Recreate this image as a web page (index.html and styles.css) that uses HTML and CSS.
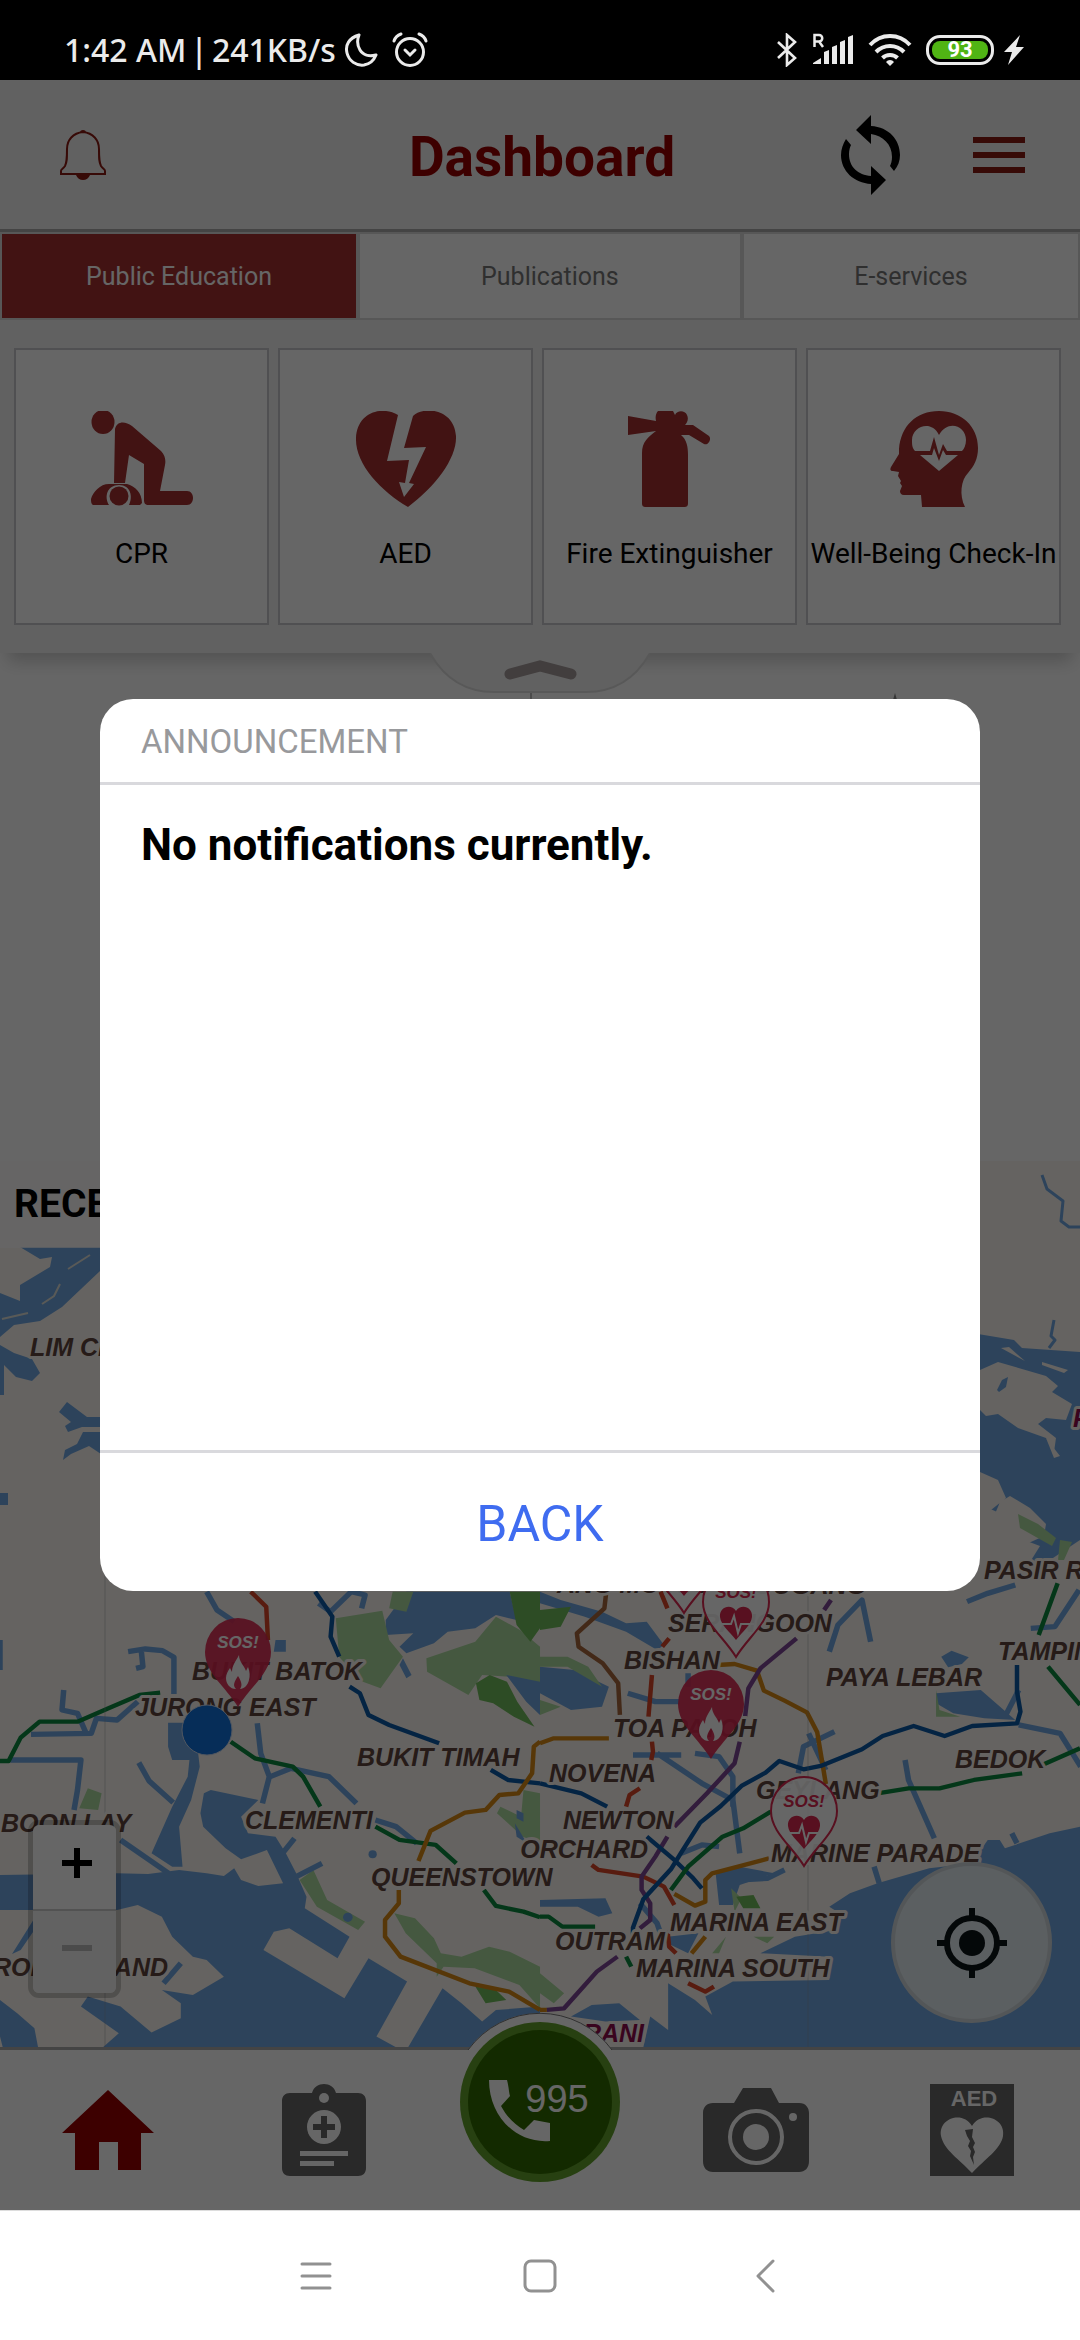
FILE: index.html
```html
<!DOCTYPE html>
<html lang="en">
<head>
<meta charset="utf-8">
<meta name="viewport" content="width=device-width, initial-scale=1">
<title>Dashboard</title>
<link rel="stylesheet" href="styles.css">
</head>
<body class="phone">

<div class="status">
  <div class="status__group">
    <span class="status__text"><span>1:42 AM</span><span>|</span><span>241KB/s</span></span>
    <svg class="status__moon" width="34" height="36" viewBox="0 0 34 36" fill="none" stroke="currentColor" stroke-width="3" stroke-linejoin="round"><path d="M15 3C5 6 1 13 3 21c2 8 9 13 17 12 6-1 10-5 12-10-7 2-13 0-16-5-3-5-3-10-1-15z"/></svg>
    <svg width="36" height="36" viewBox="0 0 36 36" fill="none" stroke="currentColor" stroke-width="3" stroke-linecap="round"><circle cx="18" cy="20" r="13.500"/><path d="M2 9c1-3 4-6 7-7M34 9c-1-3-4-6-7-7M13 18l5 5 5-5"/></svg>
  </div>
  <div class="status__group">
    <svg width="22" height="34" viewBox="0 0 22 34" fill="none" stroke="currentColor" stroke-width="2.600"><path d="M2 9l17 16-8 7V2l8 7L2 25"/></svg>
    <svg width="42" height="34" viewBox="0 0 42 34" fill="currentColor"><path d="M1 31v-1l8-5v6zM12 19l5-2v14h-5zM20 14l5-2v19h-5zM28 9l5-2v24h-5zM36 4l5-2v29h-5z"/><path d="M2.500 14V2H7a3 3 0 0 1 0 6.500H3M7 8.500l4 5.500" fill="none" stroke="currentColor" stroke-width="2.500"/></svg>
    <svg width="44" height="32" viewBox="0 0 44 32" fill="none" stroke="currentColor" stroke-width="4"><path d="M2 11C13-1 31-1 42 11M8 18c8-8 20-8 28 0M14.500 24c4-4 11-4 15 0"/><path d="M18 28l4 4 4-4a5 5 0 0 0-8 0z" fill="currentColor" stroke="none"/></svg>
    <span class="battery"><span class="battery__level">93</span></span>
    <svg class="status__bolt" width="20" height="32" viewBox="0 0 20 32" fill="currentColor"><path d="M16 1L0 18h8L4 31l16-18h-8z"/></svg>
  </div>
</div>

<div class="app">
  <header class="header">
    <button class="icon-btn header__bell" aria-label="Notifications">
      <svg width="48" height="52" viewBox="0 0 48 52" fill="none" stroke="currentColor" stroke-width="2"><path d="M24 3C14 4 8 11 8 20c0 10 0 13-2 17-2 3-4 3-4 5v3h44v-3c0-2-2-2-4-5-2-4-2-7-2-17 0-9-6-16-16-17z"/><path d="M21 4a3 3 0 0 1 6 0zM17 46h14c-1 3-4 5-7 5s-6-2-7-5z" fill="currentColor" stroke="none"/></svg>
    </button>
    <h1 class="header__title">Dashboard</h1>
    <div class="header__actions">
      <button class="icon-btn header__sync" aria-label="Refresh">
        <svg width="60" height="80" viewBox="0 0 60 80"><path d="M30 0L15 15l15 14V19c12 2 21 10 21 23 0 4-1 7-2 9l4 5c4-5 6-10 6-16 0-15-11-28-29-29zM30 80l15-15-15-14v10C17 60 8 52 8 39c0-4 1-7 2-9l-5-6C2 29 0 34 0 40c0 16 13 28 30 29z" fill="currentColor"/></svg>
      </button>
      <button class="icon-btn header__menu" aria-label="Menu">
        <svg width="52" height="36" viewBox="0 0 52 36" fill="currentColor"><path d="M0 0h52v6H0zM0 15h52v6H0zM0 30h52v6H0z"/></svg>
      </button>
    </div>
  </header>

  <section class="panel">
    <div class="tabs">
      <button class="tab tab--public tab--active">Public Education</button>
      <button class="tab tab--publications">Publications</button>
      <button class="tab tab--services">E-services</button>
    </div>
    <div class="cards">
      <a class="card" href="#cpr">
        <svg class="card__icon" width="102" height="96" viewBox="0 0 102 96" fill="currentColor"><ellipse cx="12" cy="11" rx="11.500" ry="12"/><path d="M24 18c2-8 10-8 17-3l29 25c4 4 5 9 4 14l-5 26h27c8 0 8 14 0 14H58c-4 0-5-2-5-5V53L38 44l-4 28H23z"/><path d="M0 88c2-7 9-15 18-15h18c8 2 15 9 15 19l-2 2H38c4-8 2-20-10-20S13 86 18 94H2c-2-1-2-4-2-6z"/><circle cx="28" cy="85" r="9.500"/></svg>
        <span class="card__label">CPR</span>
      </a>
      <a class="card" href="#aed">
        <svg class="card__icon" width="102" height="96" viewBox="0 0 102 96" fill="currentColor"><path d="M43 4l-11 46 22-1-4 23-6-1 5 15 10-13-5-1 17-36-22 1 9-32C68-5 99-3 101 25c1 22-20 50-48 71C26 80 0 53 1 27 2 2 26-6 43 4z"/></svg>
        <span class="card__label">AED</span>
      </a>
      <a class="card" href="#fire-extinguisher">
        <svg class="card__icon" width="102" height="96" viewBox="0 0 102 96" fill="currentColor"><path d="M9 5l28 5c-1-4 0-8 2-10h15l2 4c2-5 10-5 12 0 2 4 0 8-2 10h8l16 11c3 3-1 10-5 8L70 24h-8c6 5 7 12 7 20v48c0 3-1 4-4 4H27c-3 0-4-1-4-4V42c0-11 6-16 14-22L9 24z"/></svg>
        <span class="card__label">Fire Extinguisher</span>
      </a>
      <a class="card" href="#well-being">
        <svg class="card__icon" width="102" height="96" viewBox="-7 0 102 96"><path d="M32 96L31 84H14c-3 0-4-2-4-4l2-5-2-3 1-2-3-5 1-4-6-1c-3 0-3-2-2-4l8-13v-5C11 15 26 0 49 0c22 0 39 15 39 37 0 11-4 18-10 25-7 7-9 22-3 34z" fill="currentColor"/><path d="M49 24C58 8 76 15 76 29c0 5-2 9-4 11H57l-4-7-4 11-5-18-4 14H25c-3-3-3-7-3-11 0-13 19-21 27-5zM30 44h12l2-7 5 13 4-11 3 5h12L49 60z" class="card__cut"/></svg>
        <span class="card__label">Well-Being Check-In</span>
      </a>
    </div>
    <button class="icon-btn panel__handle" aria-label="Collapse panel">
      <svg width="220" height="40" viewBox="0 0 220 40"><path class="panel__handle-shape" d="M0 0C14 25 36 39 64 39h92c28 0 50-14 64-39"/><path class="panel__handle-mark" d="M80 21l30-8 31 8"/></svg>
    </button>
  </section>

  <section class="feed">
    <div class="feed__column feed__column--split"></div>
    <div class="feed__column"><svg width="14" height="40" viewBox="0 0 14 40" class="feed__tip"><path d="M7 0l7 24H0z"/></svg></div>
  </section>

  <section class="map">
    <svg class="map__canvas" viewBox="0 1161 1080 886" preserveAspectRatio="xMidYMid slice">
      <!-- north coast and strait -->
      <g class="water">
        <path d="M20 1247l20 12 12-2-2 10-30 18v16l-20-8v44l14-12 26-4 22-14 38-36v-24z"/>
        <path d="M0 1345l14 8 18 6 8 14-8 8-16-4-12-12v30H0zM0 1493h8v12H0z"/>
        <path d="M59 1412l8-10 20 15h14v10H82l-14 5-3-6 6-4zM101 1432v22l-12-8-18 8-8 6 2-10 12-6 6-12z"/>
        <path d="M978 1334l36 6 8 8 58 4v188l-30 20-20 2 10-16-16-6-18-24-40-18z"/>
      </g>
      <g class="land">
        <path d="M980 1370l18-8 48 14 12 10-6 6 20 12-6 16-20-2-8 6 18 14-2 14-8-14-28-10-20-14-12 2-6-6-12 2z"/>
        <path d="M980 1472l18 8 8 18-25 20 28 22-4 4-25-15zM1000 1502l10-6 20 12 16 16-2 12-22 10-30-25z"/>
        <path d="M1001 1348l8-1 16 14zM1042 1362l26 8-4 3-22-8zM1046 1438l14 18-6 2z"/>
      </g>
      <path class="water" d="M997 1390l5-10 6-3-2 10-7 5z"/>
      <g class="river river--thin">
        <path d="M1042 1175l5 14 16 12-2 20 8 6h11M1054 1320l-3 16 4 4-6 8"/>
      </g>
      <path class="park" d="M1018 1514l20 10 18 14-4 8-32-18zM1060 1540l12 2-8 18h-6z"/>
      <g class="land-line"><path d="M2 1319l26-6M42 1304l12-8 6-12M68 1269l22-14"/></g>

      <!-- western half -->
      <g transform="translate(0 1560) scale(.3444 .3333)">
        <path class="water" d="M0 945L340 940 430 942 520 930 600 940 650 948 680 925 700 960 750 978 822 970 775 870 700 898 655 865 590 800 582 760 592 700 612 690 750 720 700 770 720 820 800 830 830 880 860 940 890 1010 885 1045 1015 1130 980 1195 840 1105 795 1115 765 1170 1000 1315 1070 1195 1182 1265 1093 1430 1150 1462H1185L1285 1285 1340 1330 1400 1385 1440 1350 1568 1340V1470H290L345 1420 235 1340 255 1310 350 1340 440 1418 525 1375V1330L470 1290 560 1305 650 1250 600 1200 560 1190 500 1130 470 1070 400 1035 340 1050 100 1050H0zM100 1075V1110L60 1170 35 1182zM0 1320L50 1360 100 1405 112 1470H10L0 1430z"/>
        <path class="water" d="M488 488H565L580 620 555 720 520 800 530 920H500L440 880 500 740 545 650 550 600 500 600 488 560z"/>
        <path class="water" d="M1120 180L1180 95H1480L1500 180 1440 165 1380 205 1300 215 1260 250 1180 280 1160 260 1200 220 1120 225zM800 240h30v35h-35zM1005 240h25v40h-25zM1170 295l25 50-15 10-20-40zM1050 315l35 10-15 25-30-10z"/>
        <path class="park" d="M975 175L1110 152 1130 240 1170 290 1105 385 1040 360 985 290zM1238 295L1380 245 1440 170 1510 210 1568 260V420L1480 350 1400 345 1360 405 1240 335zM1140 95h60l-20 60-50-10zM255 685l40 15-10 50-55-5zM870 960l40-30 40 90 110 65-20 25-120-70zM1145 1060l60 15 55 60 20 45 60 10 80-30 60 15 88 45v125l-60-70-130-50-90-5-20 30 0-40-90-90zM1520 690l48 10v150l-50-20-75-70 10-20 60 30z"/>
        <path class="forest" d="M1480 95h88v110l-28 40-40-50zM1382 370l40-25 50 20 30 60 50 75-60-30-60-40-40-10zM1380 1280l60 10 30 30-60 10z"/>
        <path class="water" d="M1470 345l98 20v100l-40-40zM1495 790l35 60-30-20zM1500 750l20 10v25l-20-10z"/>
        <g class="river">
          <path d="M600 95l30 55 50 35M372 275l50-8 50 5 33 20v110M410 270l5 50-20 5M185 390l-5 60 45 10 25 60M90 523l175-3 15-45 60 5 60-55M30 600h205l-10 90-10 60M403 608l30 55 70 65M747 490l10 90 25 70-20 80M785 650l60-25 110 25 80 80M1090 780l60 20 60 50M350 840l140 100M820 880l35-45M860 950l75-40M475 1270l50-60M925 130l35 25 60-60 40 10-10 40M0 240v90"/>
        </g>
        <circle class="water" cx="1010" cy="1072" r="14"/><circle class="water" cx="1082" cy="883" r="12"/>
        <g class="rail">
          <path class="rail--green" d="M0 603h25l35-70 55-48h110l90-40 90-40 60-7M670 545l70 50 110 25 30 30 50 90M1090 800l70 40 105 15 60 55M1405 990l35 48 80 17 48 17"/>
          <path class="rail--red" d="M728 95l45 45 5 100"/>
          <path class="rail--blue" d="M915 95l50 75-5 60 25 60M1015 380l30 20 25 65 60 30 145 55M1425 630l50 30 93 10"/>
          <path class="rail--orange" d="M1568 545l-18 15-5 80-40 60-55 5-40 45-60 8-100 55-35 90M1158 990v40l-40 50v50l45 60 200 80 115 25 90 55"/>
        </g>
      </g>

      <!-- eastern half -->
      <g transform="translate(540 1560) scale(.3444 .3333)">
        <path class="water" d="M1568 800L1480 820 1350 865 1335 840 1300 840 1270 885 1260 910 1130 925 980 970 900 1000 840 1040 870 1060 860 1110 740 1130 640 1180 840 1190 840 1260 560 1265 480 1310 500 1365 450 1320 372 1270V1410L320 1370 300 1462H1568z"/>
        <path class="water" d="M0 95l60 25 120 35 70 35 60-5 50 70-20 15-90-55-120-45-130-40zM0 320l100 10 100 50-20 60-90 10-90-50zM1150 400l130-10 100 90-90-5-90-15-50-30zM1165 290l30-18 50 20-20 20-40 10zM510 940l70-20 100 20-100 35-20 60h-40zM370 1130l90-10-30 60-60-30zM90 1370l60-35 80-5 60 50-100 5zM0 1020l190-5 20 45-40 10-60-30H0z"/>
        <path class="park" d="M0 290l80 0 60 30 40 60-100-60-80 0zM0 420l60 20-60 25zM1150 390l10 60 60 20-70 0zM555 985l30 30-20 40zM500 1180l40-50-20 50zM620 1130l60 0-20 20zM0 1240l70 60-30 30-40-30z"/>
        <path class="forest" d="M0 150l90-10-30 60-60 10zM570 1010l50-5 20 40-50 0z"/>
        <g class="river">
          <path d="M255 400l80 25h70M430 340v40M270 585h140M340 580l130 90 90 50 20 160M450 580l70 10 40 60v90M750 640l15-80 90-45M840 275l25-80 70-75 25 125M1060 600l10 60 75 175M1390 495l120 25 60 100M1240 125l60-25 80-25M1425 205l70-5 70-110M1350 470l40-80M410 880l60-25 50 5M570 960l90-5 50-25M970 920l15 50M1370 820l15 30M290 1030l50 60 20 60M780 520l50 110"/>
        </g>
        <g class="rail">
          <path class="rail--brown" d="M192 100l-5 45-80 75 5 40 70 50 45 60 5 95"/>
          <path class="rail--red" d="M350 95l20 50M375 235l-20 25M325 345l-10 125M325 545l3 30-5 25M290 685l-30 20-10 35M150 915l20 15 130 20 60 30 30 55M370 1110l5 50 20 20M430 1270l50 25 25-15"/>
          <path class="rail--orange" d="M0 550l40-15 160 0M515 315l50-3 65 20 20 60 60 30 65 35 30 60 25 155M665 895l-90 25-75 20-20 20v65l-30 12-60-35M480 1130l-40 50M0 1350h20"/>
          <path class="rail--purple" d="M845 120l-20 30M745 235l-105 90-35 60-10 90M580 545l-15 65-80 90-95 100M370 830l-35 60-40 60v40l25 40v50l-30 25M225 1190l-60 45-95 110-50 5"/>
          <path class="rail--blue" d="M1385 315v80l10 60-10 35-130 8-80 30-90-30-90 30-60 40-120 50-50 10-70-25-40 35-70 40-60 60-60 50-55 90-30 50-80 90-30 85v40M0 670l120 30 75 40M310 830l80 70 55 55 25 30"/>
          <path class="rail--green" d="M1503 70l-55 155M1475 320l93 115M1568 565l-110 50M1400 640l-140 20-100 25-90 0-90 15M670 755l-80 50-60 25-100 90-50 70M0 1070h25l40 30h95M250 1190l15 30"/>
        </g>
      </g>
      <path class="tile-edge" d="M105 1560v487M808 1560v487"/>

      <g class="place">
        <text x="30" y="1356">LIM CHU KANG</text>
        <text x="984" y="1579">PASIR RIS</text>
        <text x="557" y="1593">ANG MO KIO</text>
        <text x="866" y="1594" text-anchor="end">HOUGANG</text>
        <text x="668" y="1632">SERANGOON</text>
        <text x="998" y="1660">TAMPINES</text>
        <text x="624" y="1669">BISHAN</text>
        <text x="192" y="1680">BUKIT BATOK</text>
        <text x="826" y="1686">PAYA LEBAR</text>
        <text x="135" y="1716">JURONG EAST</text>
        <text x="613" y="1737">TOA PAYOH</text>
        <text x="357" y="1766">BUKIT TIMAH</text>
        <text x="955" y="1768">BEDOK</text>
        <text x="549" y="1782">NOVENA</text>
        <text x="756" y="1799">GEYLANG</text>
        <text x="245" y="1829">CLEMENTI</text>
        <text x="563" y="1829">NEWTON</text>
        <text x="1" y="1832">BOON LAY</text>
        <text x="648" y="1858" text-anchor="end">ORCHARD</text>
        <text x="771" y="1862">MARINE PARADE</text>
        <text x="371" y="1886">QUEENSTOWN</text>
        <text x="670" y="1931">MARINA EAST</text>
        <text x="555" y="1950">OUTRAM</text>
        <text x="168" y="1976" text-anchor="end">JURONG ISLAND</text>
        <text x="636" y="1977">MARINA SOUTH</text>
        <text class="place--red" x="644" y="2042" text-anchor="end">BRANI</text>
        <text class="place--red" x="1073" y="1427">PULAU</text>
      </g>

      <defs>
        <path id="drop" d="M34 90C22 70 1 56 1 35a33 34 0 0 1 66 0C67 56 46 70 34 90z"/>
        <path id="flame" d="M35 38c0 7 5 10 7 16l2-4c2 5 2 9 1 13-1 5-5 9-9 9 3-4 1-8-2-13-3 5-6 9-2 13-6 0-10-5-10-11 0-4 2-7 4-10l2 4c0-7 4-11 7-17z"/>
        <path id="heart" d="M34 51c5-8 17-4 16 6-1 8-9 14-16 23-7-9-15-15-16-23-1-10 11-14 16-6z"/>
      </defs>
      <g class="pin pin--heart" transform="translate(650 1523)"><use href="#drop"/><use class="pin__mark" href="#heart" y="-7"/></g>
      <g class="pin pin--heart" transform="translate(702 1567)"><use href="#drop"/><use class="pin__mark" href="#heart" y="-7"/><path class="pin__beat" d="M16 57h13l3-8 4 17 3-9h13"/><text x="34" y="31">SOS!</text></g>
      <g class="pin pin--fire" transform="translate(204 1617)"><use href="#drop"/><use class="pin__mark" href="#flame"/><text x="34" y="31">SOS!</text></g>
      <g class="pin pin--fire" transform="translate(677 1669)"><use href="#drop"/><use class="pin__mark" href="#flame"/><text x="34" y="31">SOS!</text></g>
      <g class="pin pin--heart" transform="translate(770 1776)"><use href="#drop"/><use class="pin__mark" href="#heart" y="-7"/><path class="pin__beat" d="M16 57h13l3-8 4 17 3-9h13"/><text x="34" y="31">SOS!</text></g>
      <circle class="here" cx="207" cy="1730" r="25"/>
    </svg>
    <h2 class="map__heading">RECENT</h2>
    <div class="zoom">
      <button class="zoom__btn" aria-label="Zoom in"><svg width="30" height="30" viewBox="0 0 30 30"><path d="M0 12h12V0h6v12h12v6H18v12h-6V18H0z" fill="currentColor"/></svg></button>
      <button class="zoom__btn zoom__btn--off" aria-label="Zoom out" disabled><svg width="30" height="30" viewBox="0 0 30 30"><path d="M0 12h30v6H0z" fill="currentColor"/></svg></button>
    </div>
    <button class="locate" aria-label="My location">
      <svg width="70" height="70" viewBox="0 0 70 70"><circle cx="35" cy="35" r="13" fill="currentColor"/><path d="M35 0v10M35 60v10M0 35h10M60 35h10" stroke="currentColor" stroke-width="6"/><circle cx="35" cy="35" r="25" fill="none" stroke="currentColor" stroke-width="6"/></svg>
    </button>
  </section>

  <nav class="dock">
    <a class="dock__item dock__item--home" href="#home" aria-label="Home"><svg width="92" height="80" viewBox="0 0 92 80" fill="currentColor"><path d="M46 0l46 43H79v37H56V52H37v28H13V43H0z"/></svg></a>
    <a class="dock__item" href="#report" aria-label="Report"><svg width="84" height="92" viewBox="0 0 84 92"><path d="M8 9h22c3-12 21-12 24 0h22c5 0 8 3 8 8v67c0 5-3 8-8 8H8c-5 0-8-3-8-8V17c0-5 3-8 8-8z" fill="currentColor"/><g fill="#fff"><circle cx="42" cy="14" r="5"/><circle cx="42" cy="43" r="17"/><path d="M18 67h48v5H18zM18 77h34v5H18z"/></g><path d="M39 32h6v8h8v6h-8v8h-6v-8h-8v-6h8z" fill="currentColor"/></svg></a>
    <span class="dock__item"></span>
    <a class="dock__item" href="#camera" aria-label="Camera"><svg width="106" height="84" viewBox="0 0 106 84"><path d="M10 15h21l9-15h28l8 15h20c7 0 10 5 10 10v48c0 7-4 11-10 11H10C4 84 0 80 0 73V25c0-6 4-10 10-10z" fill="currentColor"/><g fill="#fff"><circle cx="90" cy="29" r="4"/><circle cx="53" cy="49" r="13"/></g><circle cx="53" cy="49" r="26" fill="none" stroke="#fff" stroke-width="4"/></svg></a>
    <a class="dock__item" href="#aed-map" aria-label="AED locations"><svg width="84" height="92" viewBox="0 0 84 92"><path d="M0 0h84v92H0z" fill="currentColor"/><text class="dock__aed" x="44" y="22">AED</text><path d="M42 42c9-16 34-8 31 10-2 13-18 23-31 37-13-14-28-23-31-37-3-18 22-26 31-10z" fill="#fff"/><path d="M35 46l8-1-1 8 3 6-2 4 2 5-2 5 1 8-4-9 1-5-3-5 2-5-3-5z" fill="currentColor"/></svg></a>
    <button class="call" aria-label="Call 995">
      <svg width="180" height="180" viewBox="0 0 180 180"><circle cx="90" cy="90" r="89" fill="#fff" stroke="none"/><path d="M18 38a89 89 0 0 1 144 0" fill="none" stroke="#777" stroke-width="1"/><circle cx="90" cy="90" r="80" fill="#62a02c"/><circle cx="90" cy="90" r="72" fill="#316a00"/><path d="M39 68h18c2 8 2 13 3 16l-9 10c6 11 13 18 23 24l10-10 16 3v18c-34 3-61-25-61-61z" fill="#fff"/><text class="call__number" x="107" y="100">995</text></svg>
    </button>
  </nav>

  <div class="scrim">
    <div class="dialog" role="dialog" aria-modal="true" aria-labelledby="dialog-title">
      <h2 class="dialog__title" id="dialog-title">ANNOUNCEMENT</h2>
      <p class="dialog__body">No notifications currently.</p>
      <button class="dialog__back">BACK</button>
    </div>
  </div>
</div>

<nav class="sysnav">
  <button class="icon-btn" aria-label="Recent apps"><svg width="32" height="32" viewBox="0 0 32 32"><path d="M2 4h28M2 16h28M2 28h28"/></svg></button>
  <button class="icon-btn" aria-label="Home"><svg width="34" height="34" viewBox="0 0 34 34"><rect x="2" y="2" width="30" height="30" rx="6"/></svg></button>
  <button class="icon-btn" aria-label="Back"><svg width="32" height="34" viewBox="0 0 32 34"><path d="M25 2L10 17l15 15"/></svg></button>
</nav>
</body>
</html>
```
FILE: styles.css
```css
* { box-sizing: border-box; }

.phone {
  margin: 0;
  min-height: 100vh;
  display: flex;
  flex-direction: column;
  background: #fff;
  color: #000;
  font-family: Roboto, "Liberation Sans", sans-serif;
}

svg { display: block; }
button { font: inherit; color: inherit; cursor: pointer; }
a { color: inherit; text-decoration: none; }

.icon-btn {
  padding: 0;
  border: 0;
  background: none;
}

/* Status bar */
.status {
  height: 80px;
  padding: 20px 56px 0 64px;
  display: flex;
  justify-content: space-between;
  align-items: center;
  background: #000;
  color: #ebebeb;
}
.status__group { display: flex; align-items: center; gap: 14px; }
.status__text {
  display: flex;
  gap: 4px;
  font: 500 32px/40px "Noto Sans", "Open Sans", sans-serif;
  white-space: nowrap;
}
.status__moon { margin-left: -6px; }
.status__bolt { margin-left: -4px; }
.battery {
  width: 68px;
  height: 30px;
  padding: 3px;
  display: flex;
  border: 3px solid #ebebeb;
  border-radius: 14px;
}
.battery__level {
  flex: 1;
  border-radius: 8px;
  background: #50b414;
  color: #fff;
  font: 700 22px/18px Roboto, sans-serif;
  text-align: center;
}

/* App shell */
.app {
  position: relative;
  flex: 1;
  display: flex;
  flex-direction: column;
}

.header {
  height: 152px;
  padding: 0 55px 0 59px;
  display: grid;
  grid-template-columns: 1fr auto 1fr;
  align-items: center;
  background: #f2f2f2;
  border-bottom: 3px solid #aaa;
}
.header__bell { justify-self: start; color: #8b1a12; }
.header__title {
  margin: 0;
  padding-top: 4px;
  color: #990000;
  font-size: 55px;
  line-height: 64px;
  font-weight: 700;
}
.header__actions { justify-self: end; display: flex; align-items: center; gap: 72px; }
.header__menu { color: #8b1a12; }

/* Education panel */
.panel {
  position: relative;
  z-index: 1;
  background: #f2f2f2;
  box-shadow: 0 16px 16px -8px rgba(0, 0, 0, .2);
}
.tabs { display: flex; }
.tab {
  height: 88px;
  padding: 0;
  border: 2px solid #dadada;
  background: #fff;
  color: #777;
  font-size: 25px;
}
.tab--public { flex: 358 0 0; }
.tab--publications { flex: 384 0 0; }
.tab--services { flex: 338 0 0; }
.tab--active { background: #a53030; color: #fff; }

.cards {
  padding: 28px 19px 28px 14px;
  display: grid;
  grid-template-columns: repeat(4, minmax(0, 1fr));
  gap: 9px;
}
.card {
  height: 277px;
  padding-top: 61px;
  display: flex;
  flex-direction: column;
  align-items: center;
  gap: 31px;
  background: #fff;
  border: 2px solid #c8c8cc;
}
.card__icon { color: #a53030; }
.card__cut { fill: #fff; }
.card__label { font-size: 28px; line-height: 32px; white-space: nowrap; }

.panel__handle {
  position: absolute;
  top: 100%;
  left: 50%;
  margin-left: -110px;
}
.panel__handle-shape { fill: #f2f2f2; stroke: #dcdcdc; stroke-width: 2; }
.panel__handle-mark {
  fill: none;
  stroke: #a59b9b;
  stroke-width: 11;
  stroke-linecap: round;
  stroke-linejoin: miter;
}

.feed { flex: 508 0 0; display: grid; grid-template-columns: 532px 1fr; background: #fff; }
.feed__column { padding-top: 40px; }
.feed__column--split { border-right: 2px solid #bbb; }
.feed__tip { margin-left: 356px; fill: #888; }

/* Map */
.map {
  position: relative;
  flex: 886 0 0;
  overflow: hidden;
  background: #fcf8f2;
}
.map__canvas { position: absolute; inset: 0; width: 100%; height: 100%; }
.water { fill: #71a8e4; }
.land { fill: #fcf8f2; }
.park { fill: #acdca0; }
.forest { fill: #72be5c; }
.river { fill: none; stroke: #71a8e4; stroke-width: 16; stroke-linejoin: round; }
.river--thin { stroke-width: 3; }
.land-line { fill: none; stroke: #dfe0da; stroke-width: 2; }
.rail { fill: none; stroke-width: 13; stroke-linejoin: round; }
.rail--green { stroke: #0a8a40; }
.rail--red { stroke: #dc4628; }
.rail--blue { stroke: #0c5aa8; }
.rail--orange { stroke: #d98a14; }
.rail--brown { stroke: #a8683c; }
.rail--purple { stroke: #7e4696; }
.tile-edge { stroke: #8d9299; stroke-width: 1; opacity: .4; }

.place {
  font: italic 700 25px "Liberation Sans", sans-serif;
  fill: #60443c;
  stroke: #fcf8f2;
  stroke-width: 6;
  stroke-linejoin: round;
  paint-order: stroke;
}
.place--red { fill: #900c4c; }

.pin text {
  font: italic 700 17px "Liberation Sans", sans-serif;
  text-anchor: middle;
  stroke: none;
}
.pin--fire { fill: #dc2850; fill-opacity: .92; }
.pin--fire text, .pin--fire .pin__mark { fill: #fff; fill-opacity: 1; }
.pin--heart { fill: #fff; fill-opacity: .92; stroke: #dc2850; stroke-width: 2; }
.pin--heart text, .pin--heart .pin__mark { fill: #dc2850; stroke: none; fill-opacity: 1; }
.pin__beat { fill: none; stroke: #fff; stroke-width: 2; }
.here { fill: #0f70dc; stroke: #c8d8f0; stroke-width: 1; }

.map__heading {
  position: absolute;
  top: 0;
  left: 0;
  width: 60%;
  margin: 0;
  padding: 0 14px;
  background: rgba(255, 255, 255, .75);
  font-size: 39px;
  line-height: 87px;
  font-weight: 700;
}
.zoom {
  position: absolute;
  left: 28px;
  bottom: 49px;
  width: 93px;
  border: 5px solid rgba(0, 0, 0, .2);
  border-radius: 11px;
  background-clip: padding-box;
}
.zoom__btn {
  width: 100%;
  height: 84px;
  padding: 0 0 8px 4px;
  display: grid;
  place-items: center;
  border: 0;
  border-radius: 6px 6px 0 0;
  background: #fff;
}
.zoom__btn--off {
  border-top: 2px solid #ccc;
  border-radius: 0 0 6px 6px;
  background: #f4f4f4;
  color: #bbb;
}
.locate {
  position: absolute;
  right: 28px;
  bottom: 24px;
  width: 161px;
  height: 161px;
  padding: 0;
  display: grid;
  place-items: center;
  border: 4px solid #d0d8dc;
  border-radius: 50%;
  background: #e4edf2;
  color: #0c1418;
}

/* Dock */
.dock {
  position: relative;
  height: 163px;
  display: grid;
  grid-template-columns: repeat(5, 1fr);
  background: #fff;
  border-top: 3px solid #aaa;
  color: #666;
}
.dock__item { display: grid; place-items: center; }
.dock__item--home { color: #990000; }
.dock__aed { font: 700 22px "Liberation Sans", sans-serif; fill: #fff; text-anchor: middle; }
.call {
  position: absolute;
  left: 50%;
  bottom: 18px;
  margin-left: -90px;
  padding: 0;
  border: 0;
  border-radius: 50%;
  background: none;
}
.call__number { font: 38px "Liberation Sans", sans-serif; fill: #fff; text-anchor: middle; }

/* Announcement dialog */
.scrim {
  position: absolute;
  inset: 0;
  z-index: 2;
  padding: 0 100px;
  display: flex;
  align-items: center;
  background: rgba(0, 0, 0, .6);
}
.dialog {
  flex: 1;
  display: flex;
  flex-direction: column;
  border-radius: 33px;
  background: #fff;
}
.dialog__title {
  margin: 0;
  padding: 23px 41px 21px;
  border-bottom: 3px solid #d9d9dd;
  color: #98999c;
  font-size: 33px;
  line-height: 39px;
  font-weight: 400;
}
.dialog__body {
  min-height: 665px;
  margin: 0;
  padding: 34px 41px;
  font-size: 44px;
  line-height: 52px;
  font-weight: 700;
}
.dialog__back {
  height: 141px;
  padding: 4px 0 0;
  border: 0;
  border-top: 3px solid #d9d9dd;
  background: none;
  color: #3f6cf0;
  font-size: 50px;
}

/* System navigation */
.sysnav {
  height: 130px;
  display: flex;
  justify-content: center;
  align-items: center;
  gap: 191px;
  background: #fff;
  border-top: 1px solid #ddd;
}
.sysnav svg {
  fill: none;
  stroke: #919191;
  stroke-width: 3;
  stroke-linecap: round;
  stroke-linejoin: round;
}
```
